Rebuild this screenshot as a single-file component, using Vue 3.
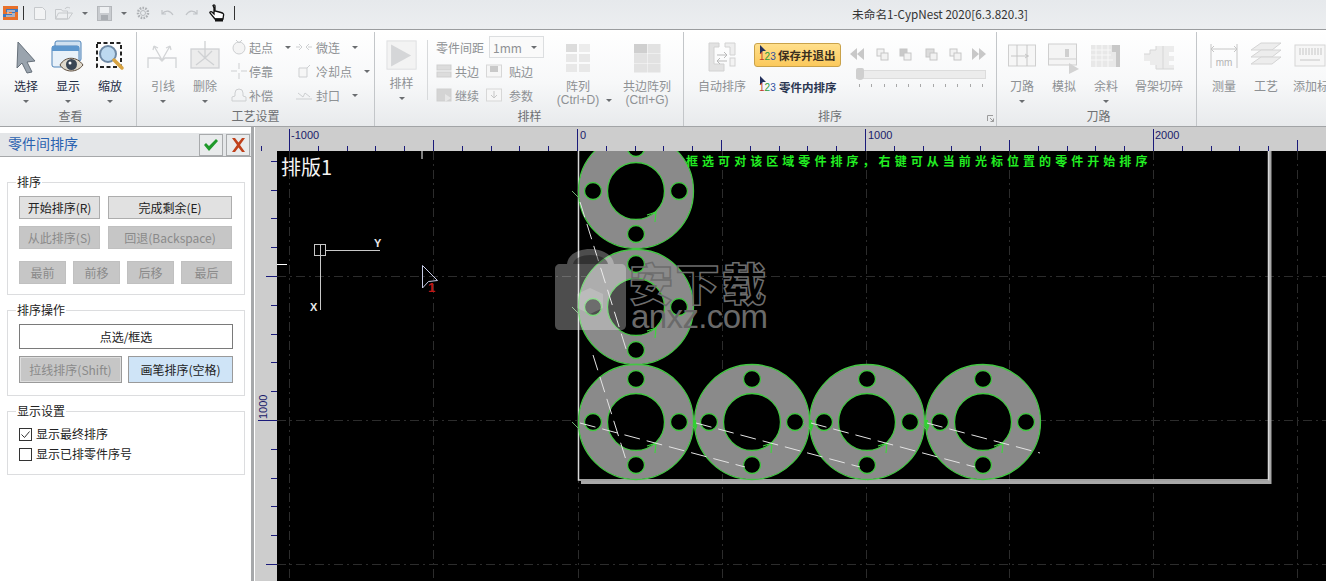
<script setup>
const hTicks = [];
for (let i = 0; i < 37; i++) {
  const x = 289 + i * 28.8;
  const major = i % 10 === 0;
  const mid = i % 5 === 0;
  hTicks.push({ x: Math.round(x), y1: major ? 129 : mid ? 140 : 146 });
}
hTicks.unshift({ x: 261, y1: 146 });

const vTicks = [];
for (let i = 1; i < 16; i++) {
  const y = 132 + i * 28.8;
  vTicks.push({ y: Math.round(y), x1: i % 10 === 0 ? 258 : i % 5 === 0 ? 266 : 271 });
}

const gridX = [289, 433, 578, 722, 866, 1009, 1153, 1297];
const gridY = [276, 420, 564];

const parts = [
  { cx: 636, cy: 191 },
  { cx: 636, cy: 307 },
  { cx: 636, cy: 422 },
  { cx: 752, cy: 422 },
  { cx: 867, cy: 422 },
  { cx: 983, cy: 422 },
];
const holeOffsets = [
  [0, -43],
  [0, 43],
  [-43, 0],
  [43, 0],
];

const dashed = [
  "580 202 L627 352",
  "593 355 L627 463",
  "580 423 L745 467",
  "696 423 L860 467",
  "811 423 L975 467",
  "927 423 L1040 453",
];
</script>

<template>
  <div class="app">
    <header class="titlebar">
      <svg class="qa logo" width="15" height="14" viewBox="0 0 15 14">
        <rect width="15" height="14" fill="#e8702a" />
        <path d="M0 8h9V6H3V3h12v3h-3v5H0z" fill="#3d78c0" />
        <path d="M4 4h8v2H6v1h6v4H3V9h6V8H4z" fill="#f3d9c6" opacity=".6" />
      </svg>
      <i class="bar first"></i>
      <svg class="qa" width="12" height="13" viewBox="0 0 12 13">
        <path d="M.5.5h8l3 3v9H.5z" fill="#f2f3f4" stroke="#c6c9cc" />
      </svg>
      <svg class="qa open" width="18" height="14" viewBox="0 0 18 14">
        <path d="M.5 13V3.500h6l1 1.500h5v8zM.5 13l3-6h14l-4 6z" fill="#eceef0" stroke="#c6c9cc" />
        <path d="M10 3c1-2 3-2 5-1" fill="none" stroke="#c6c9cc" />
      </svg>
      <i class="caret qa-caret"></i>
      <svg class="qa save" width="15" height="15" viewBox="0 0 15 15">
        <rect x=".5" y=".5" width="14" height="14" fill="#c9ccd0" stroke="#b4b7bb" />
        <rect x="3" y="1" width="9" height="6" fill="#eef0f2" />
        <rect x="4" y="9" width="7" height="5" fill="#a9adb2" />
      </svg>
      <i class="caret qa-caret"></i>
      <svg class="qa gear" width="14" height="14" viewBox="0 0 14 14">
        <circle cx="7" cy="7" r="5" fill="none" stroke="#aeb1b5" stroke-width="2.500" stroke-dasharray="1.600 1.200" />
        <circle cx="7" cy="7" r="2.500" fill="none" stroke="#b8bbbf" />
      </svg>
      <svg class="qa undo" width="13" height="9" viewBox="0 0 13 9">
        <path d="M1 1v4h4M1 5c3-4 8-4 11 1" fill="none" stroke="#c0c3c7" stroke-width="1.200" />
      </svg>
      <svg class="qa redo" width="13" height="9" viewBox="0 0 13 9">
        <path d="M12 1v4H8M12 5C9 1 4 1 1 6" fill="none" stroke="#c0c3c7" stroke-width="1.200" />
      </svg>
      <svg class="qa hand" width="16" height="18" viewBox="0 0 16 18">
        <path d="M4 1.500c1-1 2-.5 2 .5v5l6 1.500c2 .5 3 1.500 2.500 3L14 15H6L1 9c-.5-1 1-2 2-1l2 2V4z" fill="#fff" stroke="#111" stroke-width="1.300" />
        <rect x="6" y="14.500" width="8" height="3" fill="#111" />
      </svg>
      <i class="bar last"></i>
      <div class="app-title">未命名1-CypNest 2020[6.3.820.3]</div>
    </header>

    <section class="ribbon">
      <!-- 查看 -->
      <div class="group g-view">
        <div class="group-body">
          <div class="lg w42 on">
            <svg class="ico" width="34" height="34" viewBox="0 0 34 34">
              <path d="M9 2l17 19-8 1 5 10-5 1-5-10-5 5z" fill="#9aa4ae" stroke="#66707a" />
            </svg>
            <span>选择</span><i class="caret"></i>
          </div>
          <div class="lg w42 on">
            <svg class="ico" width="34" height="34" viewBox="0 0 34 34">
              <rect x="4" y="1" width="26" height="20" rx="2" fill="#cfe0f0" stroke="#4f83b8" />
              <rect x="1" y="6" width="27" height="21" rx="2" fill="#e8f1f9" stroke="#4f83b8" />
              <rect x="1" y="6" width="27" height="5" fill="#5e97cd" />
              <path d="M9 25c5-9 17-9 23 0-6 8-18 8-23 0z" fill="#dfd9cc" stroke="#59493a" />
              <circle cx="20.500" cy="24.500" r="5.500" fill="#3a4654" />
              <circle cx="19" cy="23" r="1.500" fill="#fff" />
            </svg>
            <span>显示</span><i class="caret"></i>
          </div>
          <div class="lg w42 on">
            <svg class="ico" width="34" height="34" viewBox="0 0 34 34">
              <rect x="4" y="3" width="24" height="24" fill="none" stroke="#222" stroke-width="2" stroke-dasharray="4 2.500" />
              <circle cx="15" cy="14" r="8" fill="#bcd9f0" stroke="#6f8aa6" stroke-width="2" />
              <path d="M21 20l8 8" stroke="#d9a441" stroke-width="3.500" stroke-linecap="round" />
            </svg>
            <span>缩放</span><i class="caret"></i>
          </div>
        </div>
        <div class="group-label">查看</div>
      </div>

      <!-- 工艺设置 -->
      <div class="group g-craft">
        <div class="group-body">
          <div class="lg w42">
            <svg class="ico" width="34" height="34" viewBox="0 0 34 34">
              <path d="M2 28V18h11l3 3 3-3h11v10M8 6l8 14M24 6l-8 14M8 6l-1 4M8 6l4 2M24 6l1 4M24 6l-4 2" fill="none" stroke="#d2d4d6" stroke-width="1.300" />
            </svg>
            <span>引线</span><i class="caret"></i>
          </div>
          <div class="lg w42">
            <svg class="ico" width="34" height="34" viewBox="0 0 34 34">
              <rect x="3" y="9" width="28" height="19" fill="#ececec" stroke="#d0d2d4" stroke-width="1.300" />
              <path d="M10 11l7 7 7-7M17 1v17M8 25l9-7 9 7" fill="none" stroke="#cfd1d3" stroke-width="1.300" />
            </svg>
            <span>删除</span><i class="caret"></i>
          </div>
          <div class="small-col c-start">
            <div class="sm">
              <svg width="16" height="16" viewBox="0 0 16 16"><circle cx="8" cy="9" r="6" fill="#f4f4f4" stroke="#cdcfd1" /><path d="M5 1l3 3 3-3" fill="none" stroke="#cdcfd1" /></svg>
              <span>起点</span><i class="caret side"></i>
            </div>
            <div class="sm">
              <svg width="16" height="16" viewBox="0 0 16 16"><path d="M0 8h6M10 8h6M8 0v6M8 10v6" stroke="#cdcfd1" /></svg>
              <span>停靠</span>
            </div>
            <div class="sm">
              <svg width="16" height="16" viewBox="0 0 16 16"><path d="M1 14h14v-4l-3-1V6a4 4 0 0 0-8 0v3L1 10z" fill="none" stroke="#cdcfd1" /></svg>
              <span>补偿</span>
            </div>
          </div>
          <div class="small-col c-micro">
            <div class="sm">
              <svg width="16" height="16" viewBox="0 0 16 16"><path d="M0 8h4M12 8h4M3 5l3 3-3 3M13 5l-3 3 3 3" fill="none" stroke="#cdcfd1" /></svg>
              <span class="lead">微连</span><i class="caret side"></i>
            </div>
            <div class="sm">
              <svg width="16" height="16" viewBox="0 0 16 16"><path d="M3 5h8v9H3z" fill="#f6f6f6" stroke="#cdcfd1" /><path d="M11 5l3-3" stroke="#cdcfd1" /></svg>
              <span class="lead">冷却点</span><i class="caret side"></i>
            </div>
            <div class="sm">
              <svg width="16" height="16" viewBox="0 0 16 16"><path d="M0 12h16M2 6l5 4 2-4 5 4" fill="none" stroke="#cdcfd1" /></svg>
              <span class="lead">封口</span><i class="caret side"></i>
            </div>
          </div>
        </div>
        <div class="group-label nudge-craft">工艺设置</div>
      </div>

      <!-- 排样 -->
      <div class="group g-nest">
        <div class="group-body">
          <div class="lg w52 with-rule">
            <svg class="ico" width="34" height="34" viewBox="0 0 34 34">
              <rect x=".5" y="1" width="32" height="31" fill="#f3f3f3" stroke="#dcdddf" />
              <path d="M5 5l22 12L5 29z" fill="#d5d6d8" />
            </svg>
            <span>排样</span><i class="caret"></i>
          </div>
          <div class="nest-col">
            <div class="sm gap-row">
              <span>零件间距</span>
              <div class="select">1mm<i class="caret"></i></div>
            </div>
            <div class="nest-row">
              <div class="sm cell">
                <svg width="16" height="16" viewBox="0 0 16 16"><rect x="1" y="2" width="14" height="5" fill="#dcdcdc" stroke="#cfcfcf" /><rect x="1" y="9" width="14" height="5" fill="#dcdcdc" stroke="#cfcfcf" /></svg>
                <span>共边</span>
              </div>
              <div class="sm">
                <svg width="16" height="16" viewBox="0 0 16 16"><rect x=".5" y="2" width="15" height="12" fill="#f6f6f6" stroke="#d7d7d7" /><rect x="4" y="3" width="8" height="6" fill="#c9c9c9" /></svg>
                <span class="lead">贴边</span>
              </div>
            </div>
            <div class="nest-row">
              <div class="sm cell">
                <svg width="16" height="16" viewBox="0 0 16 16"><rect x="1" y="2" width="14" height="12" fill="#d4d4d4" stroke="#cfcfcf" /><path d="M9 7l6 4-6 4z" fill="#e6e6e6" /></svg>
                <span>继续</span>
              </div>
              <div class="sm">
                <svg width="16" height="16" viewBox="0 0 16 16"><rect x=".5" y="2" width="15" height="12" fill="#f6f6f6" stroke="#d7d7d7" /><path d="M8 4v6M5 8l3 3 3-3" fill="none" stroke="#c6c6c6" /></svg>
                <span class="lead">参数</span>
              </div>
            </div>
          </div>
          <div class="lg w68">
            <svg class="ico" width="26" height="34" viewBox="0 0 26 34">
              <rect x="1" y="4" width="11" height="8" fill="#dcdcdc" /><rect x="14" y="4" width="11" height="8" fill="#ececec" />
              <rect x="1" y="14" width="11" height="8" fill="#e8e8e8" /><rect x="14" y="14" width="11" height="8" fill="#e8e8e8" />
              <rect x="1" y="24" width="11" height="8" fill="#e8e8e8" /><rect x="14" y="24" width="11" height="8" fill="#e8e8e8" />
            </svg>
            <span>阵列</span>
            <span class="second shifted">(Ctrl+D)<i class="caret inline"></i></span>
          </div>
          <div class="lg w70">
            <svg class="ico" width="28" height="34" viewBox="0 0 28 34">
              <rect x="1" y="4" width="13" height="9.500" fill="#cfcfcf" /><rect x="14.500" y="4" width="13" height="9.500" fill="#e2e2e2" />
              <rect x="1" y="14" width="13" height="9" fill="#e2e2e2" /><rect x="14.500" y="14" width="13" height="9" fill="#e2e2e2" />
              <rect x="1" y="23.500" width="13" height="9" fill="#e2e2e2" /><rect x="14.500" y="23.500" width="13" height="9" fill="#e2e2e2" />
            </svg>
            <span>共边阵列</span>
            <span class="second">(Ctrl+G)</span>
          </div>
        </div>
        <div class="group-label">排样</div>
      </div>

      <!-- 排序 -->
      <div class="group g-order">
        <div class="group-body">
          <div class="lg w68 auto-sort">
            <svg class="ico" width="28" height="34" viewBox="0 0 28 34">
              <path d="M1 3h10v4H6v17h10v7H1z" fill="#e2e2e2" stroke="#d2d2d2" />
              <path d="M17 3h10v12h-5V7h-5z" fill="#eeeeee" stroke="#d2d2d2" />
              <rect x="22" y="18" width="5" height="8" fill="#f3f3f3" stroke="#d2d2d2" />
              <path d="M9 15h10M16 12l3 3-3 3M19 21H9M12 18l-3 3 3 3" fill="none" stroke="#b9b9b9" />
            </svg>
            <span>自动排序</span>
          </div>
          <div class="order-col">
            <div class="order-btn active">
              <svg width="16" height="18" viewBox="0 0 16 18"><path d="M1 0l6 6-3 0-3 3z" fill="#23305c" /></svg>
              <b class="num"><em class="n-red">1</em><em class="n-green">2</em><em class="n-blue">3</em></b>
              <strong>保存并退出</strong>
            </div>
            <div class="order-btn plain">
              <svg width="16" height="18" viewBox="0 0 16 18"><path d="M1 0l6 6-3 0-3 3z" fill="#23305c" /></svg>
              <b class="num"><em class="n-red">1</em><em class="n-green">2</em><em class="n-blue">3</em></b>
              <strong>零件内排序</strong>
            </div>
          </div>
          <div class="seq-col">
            <div class="seq-icons">
              <svg width="136" height="14" viewBox="0 0 136 14">
                <path d="M0 7l7-6v12zM7 7l7-6v12z" fill="#c8c8c8" />
                <g fill="#f2f2f2" stroke="#c6c6c6">
                  <rect x="27" y="2" width="7" height="7" /><rect x="31" y="6" width="7" height="7" />
                  <rect x="50" y="2" width="7" height="7" fill="#c9c9c9" /><rect x="54" y="6" width="7" height="7" />
                  <rect x="76" y="2" width="8" height="8" fill="#dcdcdc" /><rect x="80" y="6" width="7" height="7" />
                  <rect x="100" y="2" width="7" height="7" /><rect x="104" y="6" width="7" height="7" />
                </g>
                <path d="M122 1l7 6-7 6zM129 1l7 6-7 6z" fill="#c8c8c8" />
              </svg>
            </div>
            <div class="slider">
              <i class="thumb"></i>
            </div>
            <div class="slider-ticks">
              <i v-for="n in 11" :key="n"></i>
            </div>
            <svg class="launcher" width="7" height="7" viewBox="0 0 7 7"><path d="M.5 6V.5H6M3 3l3.500 3.500M6.500 3.500v3h-3" fill="none" stroke="#9b9b9b" /></svg>
          </div>
        </div>
        <div class="group-label nudge-order">排序</div>
      </div>

      <!-- 刀路 -->
      <div class="group g-path">
        <div class="group-body">
          <div class="lg w42">
            <svg class="ico" width="30" height="34" viewBox="0 0 30 34">
              <rect x="1.500" y="5" width="27" height="21" fill="#f6f6f6" stroke="#cfcfcf" />
              <path d="M10 5v21M20 5v21M4 16h18M18 14l3 2-3 2" fill="none" stroke="#c6c6c6" />
            </svg>
            <span>刀路</span><i class="caret"></i>
          </div>
          <div class="lg w42">
            <svg class="ico" width="32" height="34" viewBox="0 0 32 34">
              <rect x=".5" y="4" width="28" height="21" fill="#f4f4f4" stroke="#cfcfcf" />
              <path d="M1 19h27" stroke="#cfcfcf" />
              <rect x="17" y="9" width="4" height="8" fill="#cfcfcf" />
              <path d="M21 23l10 6-10 5z" fill="#d3d3d3" />
            </svg>
            <span>模拟</span>
          </div>
          <div class="lg w42">
            <svg class="ico" width="32" height="34" viewBox="0 0 32 34">
              <rect x="1" y="5" width="29" height="22" fill="#e8e8e8" />
              <path d="M1 10h20M1 15h20M1 20h22M6 5v22M12 5v22M18 5v22" stroke="#f8f8f8" />
              <path d="M22 5h8v22h-4V12h-4z" fill="#c8c8c8" />
            </svg>
            <span>余料</span><i class="caret"></i>
          </div>
          <div class="lg w64">
            <svg class="ico" width="32" height="34" viewBox="0 0 32 34">
              <path d="M1 14h6v-4h6V6h18v6h-5v4h5v5h-5v4h5v4H13v-4H7v-4H1z" fill="#ececec" />
              <path d="M1 14h6v-4h6V6M13 25v4h18M20 6v23" fill="none" stroke="#d6d6d6" />
            </svg>
            <span>骨架切碎</span>
          </div>
        </div>
        <div class="group-label">刀路</div>
      </div>

      <!-- 其它 -->
      <div class="group g-misc">
        <div class="group-body">
          <div class="lg w42">
            <svg class="ico" width="30" height="34" viewBox="0 0 30 34">
              <path d="M2 4v24M28 4v24M2 9h26M5 6L2 9l3 3M25 6l3 3-3 3" fill="none" stroke="#c6c6c6" />
              <text x="15" y="26" text-anchor="middle" class="mm">mm</text>
            </svg>
            <span>测量</span>
          </div>
          <div class="lg w42">
            <svg class="ico" width="32" height="34" viewBox="0 0 32 34">
              <path d="M1 10l10-7h20l-9 7z" fill="#ededed" stroke="#d4d4d4" />
              <path d="M1 17l10-7h20l-9 7z" fill="#ededed" stroke="#d4d4d4" />
              <path d="M1 24l10-7h20l-9 7z" fill="#ededed" stroke="#d4d4d4" />
            </svg>
            <span>工艺</span>
          </div>
          <div class="lg w48">
            <svg class="ico" width="34" height="34" viewBox="0 0 34 34">
              <rect x="1" y="5" width="30" height="21" fill="#f6f6f6" stroke="#d6d6d6" />
              <path d="M6 8v7M9 8v7M12 8v7M15 8v7M18 8v7M21 8v7M24 8v7M27 8v7M6 20h20" stroke="#c6c6c6" />
            </svg>
            <span>添加标</span>
          </div>
        </div>
      </div>
    </section>

    <main class="workspace">
      <aside class="panel">
        <div class="panel-head">
          <span class="panel-title">零件间排序</span>
          <button class="head-btn">
            <svg width="16" height="14" viewBox="0 0 16 14"><path d="M1 7l2-2 3 3 7-7 2 2-9 10z" fill="#1f9a2a" /></svg>
          </button>
          <button class="head-btn">
            <svg width="15" height="14" viewBox="0 0 15 14"><path d="M1 0h3l3.500 4.500L11 0h3L9 7l5 7h-3L7.500 9.500 4 14H1l5-7z" fill="#c0411b" /></svg>
          </button>
        </div>

        <div class="box box-sort">
          <div class="legend">排序</div>
          <div class="btn-row">
            <button class="pbtn w-a">开始排序(R)</button>
            <button class="pbtn w-b">完成剩余(E)</button>
          </div>
          <div class="btn-row row-2">
            <button class="pbtn off w-a">从此排序(S)</button>
            <button class="pbtn off w-b">回退(Backspace)</button>
          </div>
          <div class="btn-row row-3">
            <button class="pbtn off w-c">最前</button>
            <button class="pbtn off w-c">前移</button>
            <button class="pbtn off w-c">后移</button>
            <button class="pbtn off w-d">最后</button>
          </div>
        </div>

        <div class="box box-op">
          <div class="legend">排序操作</div>
          <button class="pbtn pick">点选/框选</button>
          <div class="btn-row row-op">
            <button class="pbtn line-btn">拉线排序(Shift)</button>
            <button class="pbtn brush-btn">画笔排序(空格)</button>
          </div>
        </div>

        <div class="box box-show">
          <div class="legend">显示设置</div>
          <label class="check">
            <svg width="13" height="13" viewBox="0 0 13 13"><rect x=".5" y=".5" width="12" height="12" fill="#fff" stroke="#333" /><path d="M2.500 6.500l3 3 5-6" fill="none" stroke="#333" /></svg>
            显示最终排序
          </label>
          <label class="check">
            <svg width="13" height="13" viewBox="0 0 13 13"><rect x=".5" y=".5" width="12" height="12" fill="#fff" stroke="#333" /></svg>
            显示已排零件序号
          </label>
        </div>
      </aside>

      <div class="splitter"></div>

      <svg class="canvas" width="1071" height="454" viewBox="255 127 1071 454">
        <rect x="277" y="151" width="1049" height="430" fill="#000" />

        <!-- grid -->
        <g stroke="#2c2c2c" stroke-dasharray="9 4 2 4">
          <line v-for="x in gridX" :key="x" :x1="x + .5" y1="151" :x2="x + .5" y2="581" />
          <line v-for="y in gridY" :key="y" x1="277" :y1="y + .5" x2="1326" :y2="y + .5" />
        </g>

        <text x="281" y="175" class="sheet-name">排版1</text>

        <!-- origin marker -->
        <g fill="none" stroke="#c8c8c8">
          <rect x="314.500" y="244.500" width="11" height="11" />
          <path d="M320.500 244v66M326 250.500h54" />
        </g>
        <text x="374" y="247" class="axis">Y</text>
        <text x="310" y="311" class="axis">X</text>
        <path d="M422.500 265.500l15 15-9 1-6 6.500z" fill="none" stroke="#c6cbe6" />
        <text x="428" y="292" class="cursor-no">1</text>
        <path d="M422 151v8M277 264.500h10" stroke="#fff" />

        <!-- sheet edge -->
        <path d="M581 482.500h689V151" fill="none" stroke="#a8a8a8" stroke-width="3" />
        <path d="M578.500 151v329h690V151" fill="none" stroke="#d8d8d8" stroke-width="1.500" />

        <!-- parts -->
        <g v-for="(p, i) in parts" :key="i">
          <circle :cx="p.cx" :cy="p.cy" r="57.500" fill="#8a8a8a" stroke="#43c743" stroke-width="1.300" />
          <circle :cx="p.cx" :cy="p.cy" r="28.500" fill="#000" stroke="#43c743" stroke-width="1.300" />
          <circle
            v-for="(o, j) in holeOffsets"
            :key="j"
            :cx="p.cx + o[0]"
            :cy="p.cy + o[1]"
            r="8.500"
            fill="#000"
            stroke="#43c743"
            stroke-width="1.300"
          />
          <path
            :d="`M${p.cx + 11} ${p.cy + 24}l9-3-1 10m1-10l-2 2`"
            fill="none"
            stroke="#3fd43f"
            stroke-width="1.200"
          />
          <path :d="`M${p.cx - 64} ${p.cy}l8 8`" stroke="#6fae6f" />
        </g>
        <path d="M693 420h3l1 6 1-2-3 8-2-8zM809 420h3l1 6 1-2-3 8-2-8zM925 420h3l1 6 1-2-3 8-2-8z" fill="#32d032" />

        <!-- sort path -->
        <g fill="none" stroke="#e4e4e4" stroke-dasharray="16 7">
          <path v-for="d in dashed" :key="d" :d="`M${d}`" />
        </g>

        <text x="686" y="166" class="hint">框选可对该区域零件排序，右键可从当前光标位置的零件开始排序</text>

        <!-- rulers, drawn over the parts that run off the top -->
        <path d="M255 127h1071v24H277v430h-22z" fill="#cdcdcd" />
        <g stroke="#1b1b7a">
          <line v-for="t in hTicks" :key="t.x" :x1="t.x + .5" :y1="t.y1" :x2="t.x + .5" y2="151" />
          <line v-for="t in vTicks" :key="t.y" :x1="t.x1" :y1="t.y + .5" x2="277" :y2="t.y + .5" />
        </g>
        <g class="ruler-text">
          <text x="291" y="139">-1000</text>
          <text x="580" y="139">0</text>
          <text x="868" y="139">1000</text>
          <text x="1155" y="139">2000</text>
          <text transform="translate(267 419) rotate(-90)">1000</text>
        </g>

        <!-- watermark -->
        <g class="watermark">
          <path d="M567 264c2-20 44-20 47 0h7c3 0 5 2 5 5v56c0 3-2 5-5 5h-61c-3 0-5-2-5-5v-56c0-3 2-5 5-5z" fill="#fff" fill-opacity=".3" />
          <path d="M573 264c2-12 33-12 35 0z" fill="#000" fill-opacity=".35" />
          <path d="M590 288l13 6v14l-13 6-13-6v-14z" fill="#fff" fill-opacity=".18" />
          <text x="629" y="301" class="wm-cn">安下载</text>
          <text x="631" y="328" textLength="137" class="wm-en">anxz.com</text>
        </g>
      </svg>
    </main>
  </div>
</template>

<style scoped>
.app {
  width: 1326px;
  height: 581px;
  overflow: hidden;
  display: flex;
  flex-direction: column;
  background: #fff;
  font-family: "Noto Sans CJK SC", "Liberation Sans", sans-serif;
  font-size: 12px;
  color: #8e9194;
}

/* title bar */
.titlebar {
  height: 30px;
  box-sizing: border-box;
  flex: none;
  display: flex;
  align-items: center;
  background: linear-gradient(#e6e9ec, #eceef0);
  border-bottom: 1px solid #9a9c9e;
  padding: 0 0 3px 3px;
}
.qa {
  flex: none;
}
.logo {
  margin-right: 5px;
}
.bar {
  width: 1px;
  height: 14px;
  background: #333;
  flex: none;
}
.bar.first {
  margin-right: 10px;
}
.bar.last {
  margin-left: 9px;
}
.open {
  margin-left: 9px;
}
.qa-caret {
  margin: 0 9px;
}
.undo,
.redo,
.hand {
  margin-left: 11px;
}
.app-title {
  margin-left: 617px;
  color: #333;
  font-size: 11.700px;
  white-space: nowrap;
}
.caret {
  display: block;
  width: 0;
  height: 0;
  border-left: 3px solid transparent;
  border-right: 3px solid transparent;
  border-top: 3px solid #6a6d70;
  flex: none;
}
.caret.inline {
  display: inline-block;
  margin-left: 7px;
  vertical-align: middle;
}

/* ribbon */
.ribbon {
  height: 97px;
  box-sizing: border-box;
  flex: none;
  display: flex;
  background: linear-gradient(#fff 0%, #f7f8f9 55%, #e8eaec 100%);
  border-bottom: 1px solid #a2a4a6;
  overflow: hidden;
}
.group {
  flex: none;
  box-sizing: border-box;
  display: flex;
  flex-direction: column;
  border-right: 1px solid #c3c6c9;
  margin-top: 2px;
}
.g-view { width: 137px; padding-left: 5px; }
.g-craft { width: 238px; padding-left: 5px; }
.g-nest { width: 309px; padding-left: 1px; }
.g-order { width: 313px; }
.g-path { width: 200px; padding-left: 4px; }
.g-misc { width: 129px; padding-left: 6px; border-right: 0; }
.group-body {
  height: 75px;
  display: flex;
}
.group-label {
  height: 18px;
  line-height: 18px;
  text-align: center;
  color: #6e7073;
}
.nudge-craft { margin-left: -5px; }
.nudge-order { padding-right: 20px; }
.lg {
  flex: none;
  display: flex;
  flex-direction: column;
  align-items: center;
  padding-top: 8px;
  line-height: 15px;
  white-space: nowrap;
}
.lg.on {
  color: #1f2d45;
}
.lg .ico {
  height: 34px;
  margin-bottom: 4px;
}
.lg > .caret {
  margin-top: 7px;
}
.lg .second {
  font-family: "Liberation Sans", sans-serif;
  line-height: 14px;
}
.lg .shifted {
  margin-left: 13px;
}
.w42 { width: 42px; }
.w48 { width: 48px; }
.w52 { width: 52px; }
.w64 { width: 64px; }
.w68 { width: 68px; }
.w70 { width: 70px; }
.small-col {
  padding-top: 3px;
  display: flex;
  flex-direction: column;
}
.c-start {
  width: 65px;
  margin-left: 5px;
}
.sm {
  height: 24px;
  display: flex;
  align-items: center;
  gap: 2px;
  white-space: nowrap;
  flex: none;
}
.sm .side {
  margin-left: 10px;
}
.lead {
  margin-left: 2px;
}

.with-rule {
  box-sizing: border-box;
  border-right: 1px solid #d7d9db;
  height: 60px;
  margin-top: 8px;
  padding-top: 0;
}
.nest-col {
  padding-top: 3px;
  margin-left: 8px;
  width: 108px;
  flex: none;
}
.gap-row {
  gap: 5px;
}
.select {
  width: 55px;
  height: 22px;
  box-sizing: border-box;
  border: 1px solid #dcdee0;
  background: #fafafa;
  display: flex;
  align-items: center;
  justify-content: space-between;
  padding: 0 6px 0 3px;
  color: #8e9194;
}
.nest-row {
  display: flex;
}
.cell {
  width: 50px;
  gap: 3px;
}
.nest-col .lead {
  margin-left: 5px;
}
.auto-sort {
  margin-left: 4px;
}
.order-col {
  margin-left: -2px;
  width: 87px;
  flex: none;
  padding-top: 11px;
}
.order-btn {
  position: relative;
  height: 24px;
  box-sizing: border-box;
  display: flex;
  align-items: center;
  white-space: nowrap;
}
.order-btn svg {
  position: absolute;
  left: 4px;
  top: 1px;
}
.order-btn strong {
  font-weight: 700;
  font-size: 11.500px;
  color: #2a3550;
  margin-left: 24px;
}
.order-btn.active {
  background: linear-gradient(#ffdf8c, #fbc95c);
  border: 1px solid #c9a24a;
  border-radius: 3px;
}
.order-btn.active strong {
  margin-left: 23px;
  color: #3a2f20;
}
.order-btn.plain {
  margin-top: 8px;
  margin-left: 1px;
}
.num {
  position: absolute;
  left: 4px;
  top: 7px;
  font: 10px "Liberation Sans", sans-serif;
}
.num em {
  font-style: normal;
}
.n-red { color: #c0392b; }
.n-green { color: #2a9a3a; }
.n-blue { color: #2b4fa0; }
.seq-col {
  position: relative;
  margin-left: 15px;
  width: 136px;
  flex: none;
  padding-top: 15px;
}
.seq-icons {
  height: 14px;
  line-height: 0;
  margin-left: -6px;
}
.slider {
  position: relative;
  width: 128px;
  height: 7px;
  margin-top: 9px;
  background: #ececec;
  border: 1px solid #dcdcdc;
}
.thumb {
  position: absolute;
  left: -1px;
  top: -3px;
  width: 8px;
  height: 12px;
  background: #cfcfcf;
  border-radius: 2px 2px 4px 4px;
}
.slider-ticks {
  width: 124px;
  margin: 5px 0 0 3px;
  display: flex;
  justify-content: space-between;
}
.slider-ticks i {
  width: 1px;
  height: 3px;
  background: #a8a8a8;
}
.launcher {
  position: absolute;
  right: -2px;
  bottom: -15px;
}
.mm {
  font: 10px "Liberation Sans", sans-serif;
  fill: #b4b4b4;
}

/* workspace */
.workspace {
  flex: 1;
  min-height: 0;
  display: flex;
  position: relative;
}
.panel {
  width: 251px;
  flex: none;
  background: #fff;
  padding-top: 6px;
  box-sizing: border-box;
  color: #222;
}
.panel-head {
  height: 24px;
  box-sizing: border-box;
  background: #e4e6e8;
  border-bottom: 1px solid #a6a8aa;
  display: flex;
  align-items: center;
  padding-right: 1px;
  gap: 3px;
}
.panel-title {
  flex: 1;
  padding: 0 0 3px 8px;
  color: #2a62b0;
  font-size: 14px;
}
.head-btn {
  width: 24px;
  height: 22px;
  padding: 0;
  background: #e9ebec;
  border: 1px solid #a8aaac;
  display: flex;
  align-items: center;
  justify-content: center;
}
.box {
  position: relative;
  width: 238px;
  margin-left: 7px;
  box-sizing: border-box;
  border: 1px solid #dcdddf;
  padding-left: 11px;
}
.box-sort {
  height: 113px;
  margin-top: 25px;
  padding-top: 13px;
}
.box-op {
  height: 86px;
  margin-top: 15px;
  padding-top: 13px;
}
.box-show {
  height: 64px;
  margin-top: 15px;
  padding-top: 12px;
}
.legend {
  position: absolute;
  left: 8px;
  top: -10px;
  background: #fff;
  padding: 0 1px;
  line-height: 18px;
  color: #222;
}
.btn-row {
  display: flex;
  gap: 8px;
}
.row-2 {
  margin-top: 7px;
}
.row-3 {
  margin-top: 12px;
  gap: 7px;
}
.row-op {
  margin-top: 7px;
  gap: 6px;
}
.pbtn {
  box-sizing: border-box;
  height: 23px;
  padding: 0;
  background: #e1e1e1;
  border: 1px solid #adadad;
  font: inherit;
  color: #222;
  white-space: nowrap;
}
.pbtn.off {
  background: #c6c6c6;
  border-color: #c0c0c0;
  color: #8a8a8a;
}
.w-a { width: 81px; }
.w-b { width: 124px; }
.w-c { width: 47px; }
.w-d { width: 51px; }
.pick {
  display: block;
  width: 214px;
  height: 25px;
  background: #fff;
  border-color: #7a7a7a;
}
.line-btn {
  width: 103px;
  height: 27px;
  background: #c6c6c6;
  color: #8a8a8a;
  border: 2px solid #dedede;
  outline: 1px solid #9a9a9a;
  outline-offset: -1px;
}
.brush-btn {
  width: 105px;
  height: 27px;
  background: #cfe4f7;
  border-color: #9a9a9a;
}
.check {
  display: flex;
  align-items: center;
  gap: 4px;
  height: 20px;
  line-height: 20px;
  color: #222;
}
.splitter {
  width: 4px;
  flex: none;
  background: linear-gradient(90deg, #a6a8aa 75%, #fff 75%);
}
.canvas {
  flex: none;
  display: block;
}
.ruler-text text {
  font: 11px "Liberation Sans", sans-serif;
  fill: #1b1b6a;
}
.sheet-name {
  font: 20px "Noto Sans CJK SC", sans-serif;
  fill: #f4f4f4;
}
.hint {
  font: 700 12px "Noto Sans CJK SC", sans-serif;
  fill: #22ee22;
  letter-spacing: 4.050px;
}
.axis {
  font: 700 11px "Liberation Sans", sans-serif;
  fill: #e8e8e8;
}
.cursor-no {
  font: 700 13px "Liberation Sans", sans-serif;
  fill: #c01818;
}
.wm-cn {
  font: 900 44px "Noto Sans CJK SC", sans-serif;
  letter-spacing: 2.500px;
  fill: none;
  stroke: #6d6d6d;
  stroke-width: 1.500;
}
.wm-en {
  font: 33px "Liberation Sans", sans-serif;
  fill: #6a6a6a;
}
</style>

<style>
html,
body {
  margin: 0;
  background: #fff;
}
</style>
